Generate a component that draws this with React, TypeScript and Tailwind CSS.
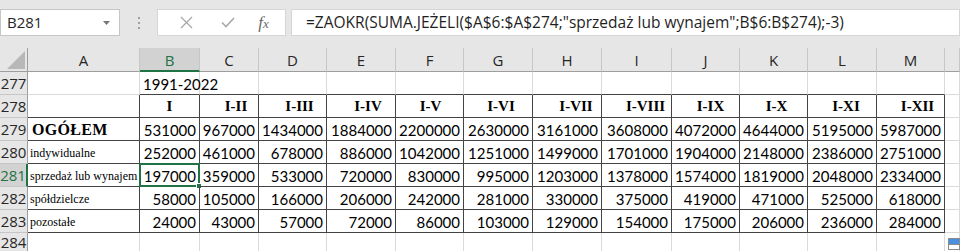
import React from "react";

const cols = ["A", "B", "C", "D", "E", "F", "G", "H", "I", "J", "K", "L", "M", ""];

const heads = [
  { t: "I", c: "pl-0" },
  { t: "I-II", c: "pl-[14px]" },
  { t: "I-III", c: "pl-[14px]" },
  { t: "I-IV", c: "pl-[14px]" },
  { t: "I-V", c: "pl-[2px]" },
  { t: "I-VI", c: "pl-[6px]" },
  { t: "I-VII", c: "pl-[18px]" },
  { t: "I-VIII", c: "pl-[18px]" },
  { t: "I-IX", c: "pl-[10px]" },
  { t: "I-X", c: "pl-[6px]" },
  { t: "I-XI", c: "pl-[8px]" },
  { t: "I-XII", c: "pl-[14px]" },
];

const rows = [
  { n: 279, label: "OGÓŁEM", bold: true, v: [531000, 967000, 1434000, 1884000, 2200000, 2630000, 3161000, 3608000, 4072000, 4644000, 5195000, 5987000] },
  { n: 280, label: "indywidualne", v: [252000, 461000, 678000, 886000, 1042000, 1251000, 1499000, 1701000, 1904000, 2148000, 2386000, 2751000] },
  { n: 281, label: "sprzedaż lub wynajem", v: [197000, 359000, 533000, 720000, 830000, 995000, 1203000, 1378000, 1574000, 1819000, 2048000, 2334000] },
  { n: 282, label: "spółdzielcze", v: [58000, 105000, 166000, 206000, 242000, 281000, 330000, 375000, 419000, 471000, 525000, 618000] },
  { n: 283, label: "pozostałe", v: [24000, 43000, 57000, 72000, 86000, 103000, 129000, 154000, 175000, 206000, 236000, 284000] },
];

const light = "border-r border-b border-[#dadada]";
const dark = "border-r border-b border-[#444444]";
const cellFont = "font-['Lato','Open_Sans',sans-serif] text-[15px] text-black";
const serif = "font-['Liberation_Serif','Times_New_Roman',serif] text-black";

function RowHead({ n, active, top }: { n: number; active?: boolean; top?: boolean }) {
  return (
    <div
      className={
        "flex justify-center border-b font-['Open_Sans',sans-serif] text-[15px] " +
        (top ? "items-start pt-[1px] leading-[17px] " : "items-end pb-[1px] leading-[20px] ") +
        (active
          ? "bg-[#d2d2d2] text-[#217346] border-b-[#c6c6c6] border-r-2 border-r-[#217346]"
          : "bg-[#e6e6e6] text-[#262626] border-[#c6c6c6] border-r border-r-[#9e9e9e]")
      }
    >
      {n}
    </div>
  );
}

export default function App() {
  return (
    <div className="w-[960px] h-[251px] overflow-hidden bg-white select-none">
      {/* formula bar */}
      <div className="h-[48px] bg-[#e6e6e6] flex items-start pt-[9px] gap-0">
        <div className="w-[120px] h-[27px] bg-white border border-[#c6c6c6] flex items-center pl-[6px] pr-[9px] justify-between">
          <span className="font-['Open_Sans',sans-serif] text-[15px] text-[#262626]">B281</span>
          <svg width="7" height="4" viewBox="0 0 7 4">
            <path d="M0 0 L7 0 L3.5 4 Z" fill="#777" />
          </svg>
        </div>
        <div className="w-[37px] h-[27px] flex flex-col items-center justify-center gap-[3px]">
          <div className="w-[2px] h-[2px] bg-[#a0a0a0]" />
          <div className="w-[2px] h-[2px] bg-[#a0a0a0]" />
          <div className="w-[2px] h-[2px] bg-[#a0a0a0]" />
        </div>
        <div className="w-[129px] h-[27px] bg-white border border-[#d6d6d6] flex items-center">
          <div className="w-[47px] flex justify-center pl-[9px]">
            <svg width="13" height="13" viewBox="0 0 13 13">
              <path d="M1 1 L12 12 M12 1 L1 12" stroke="#a8a8a8" strokeWidth="1.3" />
            </svg>
          </div>
          <div className="w-[40px] flex justify-center pl-[6px]">
            <svg width="14" height="11" viewBox="0 0 14 11">
              <path d="M1 5.5 L5 9.5 L13 1" stroke="#a8a8a8" strokeWidth="1.6" fill="none" />
            </svg>
          </div>
          <div className="flex-1 flex justify-center pr-[3px]">
            <span className="font-['Liberation_Serif',serif] italic text-[17px] text-[#6a6a6a] leading-none">
              f<span className="text-[13px]">x</span>
            </span>
          </div>
        </div>
        <div className="ml-[5px] flex-1 h-[27px] bg-white border border-[#d6d6d6] flex items-center pl-[14px]">
          <span className="font-['Open_Sans',sans-serif] text-[15.5px] text-[#1f1f1f] whitespace-nowrap">
            =ZAOKR(SUMA.JEŻELI($A$6:$A$274;"sprzedaż lub wynajem";B$6:B$274);-3)
          </span>
        </div>
      </div>

      {/* grid */}
      <div className="grid grid-cols-[28px_112px_60px_59px_68px_69px_68px_69px_69px_70px_68px_68px_69px_68px_1fr] grid-rows-[24px_23px_23px_23px_23px_23px_23px_23px_19px]">
        {/* column headers */}
        <div className="bg-[#e6e6e6] border-r border-b border-[#9e9e9e] relative">
          <svg className="absolute right-[2px] bottom-[2px]" width="18" height="18" viewBox="0 0 18 18">
            <path d="M18 0 L18 18 L0 18 Z" fill="#b8b8b8" />
          </svg>
        </div>
        {cols.map((c, i) =>
          c === "B" ? (
            <div
              key={c}
              className="bg-[#d2d2d2] border-r border-r-[#c6c6c6] border-b-2 border-b-[#217346] flex items-center justify-center pt-[2px] font-['Open_Sans',sans-serif] text-[15px] text-[#217346]"
            >
              {c}
            </div>
          ) : (
            <div
              key={c + i}
              className="bg-[#e6e6e6] border-r border-r-[#c6c6c6] border-b border-b-[#9e9e9e] flex items-center justify-center pt-[2px] font-['Open_Sans',sans-serif] text-[15px] text-[#262626]"
            >
              {c}
            </div>
          )
        )}

        {/* row 277 */}
        <RowHead n={277} />
        <div className={light} />
        <div className={"border-b border-b-[#444444] border-r border-r-[#dadada] relative"}>
          <span className={cellFont + " absolute left-[3px] bottom-[0px] leading-[20px] whitespace-nowrap"}>1991-2022</span>
        </div>
        {heads.slice(1).map((h) => (
          <div key={"e" + h.t} className="border-b border-b-[#444444] border-r border-r-[#dadada]" />
        ))}
        <div className={light} />

        {/* row 278 */}
        <RowHead n={278} />
        <div className="border-b border-b-[#444444] border-r border-r-[#444444]" />
        {heads.map((h) => (
          <div
            key={h.t}
            className={dark + " flex items-end justify-center pb-[1px] " + h.c}
          >
            <span className={serif + " font-bold text-[15px] leading-[20px]"}>{h.t}</span>
          </div>
        ))}
        <div className={light} />

        {/* data rows */}
        {rows.map((r) => (
          <React.Fragment key={r.n}>
            <RowHead n={r.n} active={r.n === 281} />
            <div className={dark + " flex items-end pl-[2px] pb-[2px] whitespace-nowrap overflow-hidden"}>
              {r.bold ? (
                <span className={serif + " font-bold text-[16px] leading-[20px] tracking-[0.3px] pl-[2px] mb-[-2px]"}>{r.label}</span>
              ) : (
                <span className={serif + " text-[12px] leading-[16px]"}>{r.label}</span>
              )}
            </div>
            {r.v.map((v, i) => (
              <div
                key={i}
                className={dark + " flex items-end justify-end pr-[3px] relative"}
              >
                <span className={cellFont + " leading-[20px]"}>{v}</span>
                {r.n === 281 && i === 0 && (
                  <div className="absolute left-[-1px] top-[-1px] right-[-1px] bottom-[-1px] border-2 border-[#217346]">
                    <div className="absolute right-[-4px] bottom-[-4px] w-[6px] h-[6px] bg-[#217346] border border-white" />
                  </div>
                )}
              </div>
            ))}
            <div className={light} />
          </React.Fragment>
        ))}

        {/* row 284 */}
        <RowHead n={284} top />
        {cols.map((c, i) =>
          i === 13 ? (
            <div key={"l" + i} className="border-r border-[#dadada] relative">
              <div className="absolute left-[3px] top-[5px] w-[12px] h-[12px] bg-white border border-[#8a8a8a] flex flex-col">
                <div className="h-[5px] bg-[#4a90e2]" />
                <div className="h-[1px] bg-[#8a8a8a]" />
              </div>
            </div>
          ) : (
            <div key={"l" + i} className="border-r border-[#dadada]" />
          )
        )}
      </div>
    </div>
  );
}
